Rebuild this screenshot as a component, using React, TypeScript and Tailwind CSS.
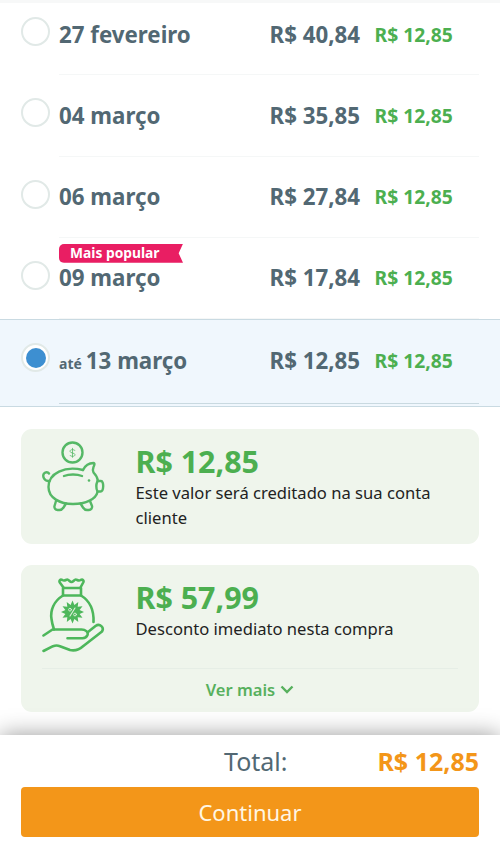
import React from 'react';
import { clsx } from 'clsx';

type PriceOption = {
  date: string;
  prefix?: string;
  price: string;
  cashback: string;
  popular?: boolean;
  selected?: boolean;
};

const options: PriceOption[] = [
  { date: '27 fevereiro', price: 'R$ 40,84', cashback: 'R$ 12,85' },
  { date: '04 março', price: 'R$ 35,85', cashback: 'R$ 12,85' },
  { date: '06 março', price: 'R$ 27,84', cashback: 'R$ 12,85' },
  { date: '09 março', price: 'R$ 17,84', cashback: 'R$ 12,85', popular: true },
  { date: '13 março', prefix: 'até', price: 'R$ 12,85', cashback: 'R$ 12,85', selected: true },
];

// 12-pointed seal in the middle of the money bag
const sealPoints = Array.from({ length: 24 }, (_, i) => {
  const radius = i % 2 === 0 ? 11.5 : 7.4;
  const angle = (i * Math.PI) / 12;
  return `${(30.5 + radius * Math.sin(angle)).toFixed(1)},${(34 - radius * Math.cos(angle)).toFixed(1)}`;
}).join(' ');

const PiggyIcon: React.FC = () => (
  <svg width="64" height="72" viewBox="0 0 64 72" fill="none" stroke="#55b866" strokeWidth="2.4" strokeLinecap="round" strokeLinejoin="round">
    <circle cx="30.5" cy="11.5" r="10" />
    <path d="M33 9.5c-.7-1.200-5-1.400-5 .8s5 1.200 5 3.400-4.300 2-5 .7M30.500 7.300v9" strokeWidth="1" strokeOpacity=".8" />
    <path d="M41 29c2-4 5.500-7 10.500-7 1.500 0 1 2 0 4-.8 2-.8 4 0 5.500 2 2 4 5 4.500 8.500" />
    <path d="M41 29C23 24.500 6.500 32 6.500 46 6.500 57 18 63 31 63S54 58 55.500 51" />
    <path d="M55.500 40h3.500c3 0 3 10.500-.5 10.500h-3c-1.500-3-1.500-7 0-10.500Z" />
    <path d="M22 35c5-2 13-2 18 0" />
    <path d="M7.500 40c-5 .5-7.500-4.500-5.500-7.500 1.500-1.700 4-1.500 5 0" />
    <path d="M14 60l-1.500 5c-.5 2 1 4 3 4h2c2 0 3-1 4-2.500l2.500-4M38.500 62.500l2.500 4c1 1.500 2 2.500 4 2.500h2c2 0 3.500-2 3-4L48 60" />
    <circle cx="47" cy="39.500" r="1.300" fill="#55b866" stroke="none" />
  </svg>
);

const MoneyBagIcon: React.FC = () => (
  <svg width="64" height="76" viewBox="0 0 64 76" fill="none" stroke="#4db75b" strokeWidth="2.6" strokeLinecap="round" strokeLinejoin="round">
    <path d="M21.500 9.500 17.800 4.500c-1-2 .5-3.500 2.500-2.500 2.500 1.500 3.500-.5 5-.5s2.500 2.500 4.200 2.500 2.700-2.500 4.200-2.500 2.500 2 5 .5c2-1 3.500.5 2.500 2.500L38.500 9.500" />
    <path d="M21 10h18v7.500H21z" />
    <path d="M21 17.500C12 23 8 32 9.500 41c.5 4.500 1.500 7.500 2.500 10.500M39 17.500C48 23 52 32 51.500 44" />
    <path d="M1.500 57.500l9-6H39.500c4 0 7 2.500 6 5.500-.8 2-2.500 3.200-5 3.200H25.500" />
    <path d="M46 54 53.500 48c4.500-3 9 1.500 6.500 5.500L42 67.500c-4.500 4-8.500 6-14 4.500l-10-3.800c-2.500-1-4.500-1-7 0L1.500 73" />
    <polygon points={sealPoints} fill="#4db75b" stroke="none" />
    <path d="m33 30-5 8" stroke="#dff0dc" strokeWidth="1.1" />
    <circle cx="28" cy="31.7" r="1.4" stroke="#dff0dc" strokeWidth=".9" />
    <circle cx="33" cy="36.5" r="1.4" stroke="#dff0dc" strokeWidth=".9" />
  </svg>
);

const Radio: React.FC<{ checked?: boolean }> = ({ checked }) => (
  <span className="flex size-[29px] shrink-0 items-center justify-center rounded-full border-2 border-[#e1e9e7] bg-white">
    {checked && <span className="size-5 rounded-full bg-[#3d8fd1]" />}
  </span>
);

const OptionRow: React.FC<{ option: PriceOption }> = ({ option }) => (
  <label
    className={clsx(
      'flex px-[21px]',
      option.selected ? 'h-[88px] border-y border-[#c9dae2] bg-[#f0f7fd] pb-[2px]' : 'h-[81.25px]'
    )}
  >
    <div className="w-[38px] pt-[23px]">
      <Radio checked={option.selected} />
    </div>
    <div
      className={clsx(
        'relative flex flex-1 items-baseline border-b pt-[25.5px] leading-[30px] font-bold text-[#526873]',
        option.selected ? 'border-[#c9d9e0]' : 'border-[#f5f7f7]'
      )}
    >
      {option.popular && (
        <span className="absolute top-[6px] left-0 h-[19px] w-[124px] rounded-l-[5px] bg-[#e91e63] pl-[11px] text-[13.8px] leading-[18px] text-white [clip-path:polygon(0_0,100%_0,96.5%_50%,100%_100%,0_100%)]">
          Mais popular
        </span>
      )}
      <span className="w-[210.5px] text-[22.3px] whitespace-nowrap">
        {option.prefix && <span className="mr-1 text-[14px]">{option.prefix}</span>}
        {option.date}
      </span>
      <span className="w-[105px] text-[22.3px]">{option.price}</span>
      <span className="relative -top-px text-[19.3px] text-[#4caf50]">{option.cashback}</span>
    </div>
  </label>
);

const App: React.FC = () => {
  return (
    <div className="relative flex h-[851px] w-[500px] flex-col overflow-hidden bg-white font-['Noto_Sans',sans-serif]">
      <div className="absolute inset-x-0 top-0 z-10 h-[3px] bg-[#f7f8f8]" />

      {/* Dates */}
      <div className="-mt-[6px] shrink-0">
        {options.map(option => (
          <OptionRow key={option.date} option={option} />
        ))}
      </div>

      {/* Benefits */}
      <div className="flex flex-1 flex-col gap-[21px] px-[21px] pt-[22px]">
        <div className="flex h-[115px] shrink-0 rounded-[11px] bg-[#eff5ec] pl-[21px]">
          <div className="w-[93.5px] pt-[12px]">
            <PiggyIcon />
          </div>
          <div className="flex-1 pt-[14px]">
            <p className="text-[30.4px] leading-[37px] font-bold text-[#4caf50]">R$ 12,85</p>
            <p className="w-[310px] text-[16.6px] leading-[25px] text-[#222]">
              Este valor será creditado na sua conta cliente
            </p>
          </div>
        </div>

        <div className="h-[147px] shrink-0 rounded-[11px] bg-[#eff5ec] px-[21px]">
          <div className="flex h-[104px] border-b border-[#e6eee6]">
            <div className="w-[93.5px] pt-[13px]">
              <MoneyBagIcon />
            </div>
            <div className="flex-1 pt-[14px]">
              <p className="text-[30.4px] leading-[37px] font-bold text-[#4caf50]">R$ 57,99</p>
              <p className="text-[16.6px] leading-[25px] text-[#222]">Desconto imediato nesta compra</p>
            </div>
          </div>
          <button className="flex h-[43px] w-full items-center justify-center gap-[5px] text-[16.5px] font-semibold text-[#57b05d]">
            Ver mais
            <svg className="-mt-[2px]" width="14" height="9" viewBox="0 0 14 9" fill="none" stroke="currentColor" strokeWidth="2.4">
              <path d="m1.500 1.500 5.500 5.500 5.500-5.500" />
            </svg>
          </button>
        </div>
      </div>

      {/* Footer */}
      <div className="relative h-[116px] shrink-0 bg-white px-[21px] pt-[9px] shadow-[0_0_22px_rgba(0,0,0,0.4)]">
        <div className="flex h-[43px] items-baseline justify-between leading-[34px]">
          <span className="pl-[203px] text-[25px] text-[#526873]">Total:</span>
          <span className="text-[25px] font-bold text-[#f39619]">R$ 12,85</span>
        </div>
        <button className="h-[50px] w-full rounded-[4px] bg-[#f39619] text-[22px] text-[#fff6e4]">Continuar</button>
      </div>
    </div>
  );
};

export default App;
